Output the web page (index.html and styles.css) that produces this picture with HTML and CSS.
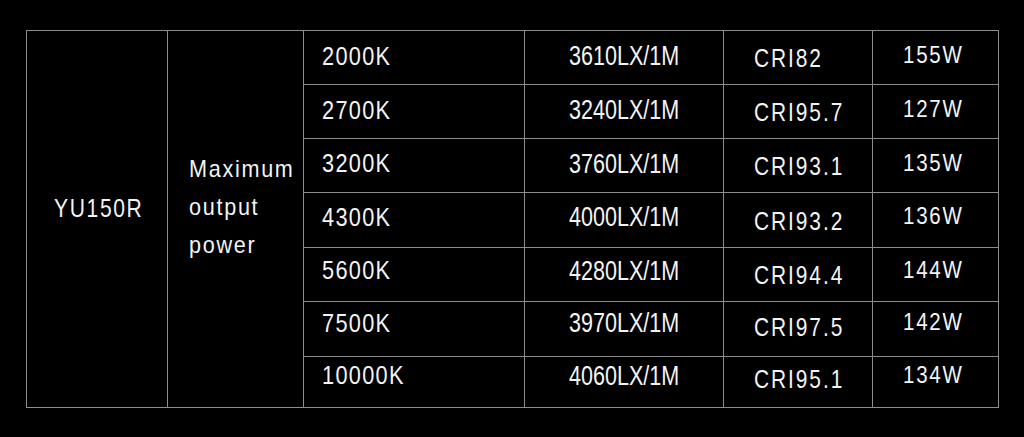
FILE: index.html
```html
<!DOCTYPE html>
<html lang="en">
<head>
<meta charset="utf-8">
<title>YU150R spec table</title>
<link rel="stylesheet" href="styles.css">
</head>
<body>
<table class="spec">
  <colgroup>
    <col class="c-model">
    <col class="c-label">
    <col class="c-cct">
    <col class="c-lux">
    <col class="c-cri">
    <col class="c-power">
  </colgroup>
  <tbody>
    <tr class="r1">
      <td class="model" rowspan="7"><span class="t">YU150R</span></td>
      <td class="label" rowspan="7"><span class="t">Maximum<br>output<br>power</span></td>
      <td class="cct"><span class="t">2000K</span></td><td class="lux"><span class="t">3610LX/1M</span></td><td class="cri"><span class="t">CRI82</span></td><td class="pw"><span class="t">155W</span></td>
    </tr>
    <tr class="r2"><td class="cct"><span class="t">2700K</span></td><td class="lux"><span class="t">3240LX/1M</span></td><td class="cri"><span class="t">CRI95.7</span></td><td class="pw"><span class="t">127W</span></td></tr>
    <tr class="r3"><td class="cct"><span class="t">3200K</span></td><td class="lux"><span class="t">3760LX/1M</span></td><td class="cri"><span class="t">CRI93.1</span></td><td class="pw"><span class="t">135W</span></td></tr>
    <tr class="r4"><td class="cct"><span class="t">4300K</span></td><td class="lux"><span class="t">4000LX/1M</span></td><td class="cri"><span class="t">CRI93.2</span></td><td class="pw"><span class="t">136W</span></td></tr>
    <tr class="r5"><td class="cct"><span class="t">5600K</span></td><td class="lux"><span class="t">4280LX/1M</span></td><td class="cri"><span class="t">CRI94.4</span></td><td class="pw"><span class="t">144W</span></td></tr>
    <tr class="r6"><td class="cct"><span class="t">7500K</span></td><td class="lux"><span class="t">3970LX/1M</span></td><td class="cri"><span class="t">CRI97.5</span></td><td class="pw"><span class="t">142W</span></td></tr>
    <tr class="r7"><td class="cct"><span class="t">10000K</span></td><td class="lux"><span class="t">4060LX/1M</span></td><td class="cri"><span class="t">CRI95.1</span></td><td class="pw"><span class="t">134W</span></td></tr>
  </tbody>
</table>
</body>
</html>
```
FILE: styles.css
```css
html, body {
  margin: 0;
  padding: 0;
  background: #000;
}
body {
  padding: 30px 0 0 26px;
  font-family: "Liberation Sans", Arial, sans-serif;
  color: #f4f4f4;
}
.spec {
  border-collapse: collapse;
  table-layout: fixed;
  width: 972px;
}
.spec td {
  border: 1px solid #8c8c8c;
  padding: 0;
  white-space: nowrap;
  line-height: 1;
  vertical-align: middle;
}
.spec .t {
  display: inline-block;
  transform-origin: left center;
  transform: scaleX(0.82);
}
.c-model { width: 141px; }
.c-label { width: 136px; }
.c-cct { width: 221px; }
.c-lux { width: 199px; }
.c-cri { width: 149px; }
.c-power { width: 126px; }

.r1, .r2, .r3, .r5 { height: 54px; }
.r4, .r6 { height: 55px; }
.r7 { height: 51px; }

.spec .model {
  padding: 0 0 20px 27px;
  font-size: 25.7px;
  letter-spacing: 2px;
}
.spec .label {
  padding: 0 0 24px 21px;
  font-size: 24px;
  line-height: 38px;
  letter-spacing: 1.9px;
}
.spec .label .t {
  line-height: 38px;
  transform: scaleX(0.9);
}
.spec .cct {
  padding-left: 18px;
  font-size: 26.5px;
  letter-spacing: 1.6px;
}
.spec .lux {
  padding-left: 44px;
  font-size: 28px;
  letter-spacing: 0;
}
.spec .lux .t { transform: scaleX(0.77); }
.spec .cri {
  padding-left: 30px;
  padding-top: 3px;
  font-size: 25.5px;
  letter-spacing: 2.35px;
}
.spec .pw {
  padding-left: 30px;
  font-size: 23.3px;
  letter-spacing: 2px;
}
.spec .pw .t { transform: scaleX(0.88); }

.r1 .cct, .r1 .lux, .r1 .pw,
.r2 .cct, .r2 .lux, .r2 .pw { padding-bottom: 3px; }
.r3 .cct, .r3 .lux, .r3 .pw { padding-bottom: 4px; }
.r4 .cct, .r4 .lux, .r4 .pw { padding-bottom: 6px; }
.r5 .cct, .r5 .lux, .r5 .pw { padding-bottom: 8px; }
.r6 .cct, .r6 .lux, .r6 .pw { padding-bottom: 12px; }
.r7 .cct, .r7 .lux, .r7 .pw { padding-bottom: 13px; }
.r6 .cri { padding-bottom: 6px; }
.r7 .cri { padding-bottom: 7px; }
```
